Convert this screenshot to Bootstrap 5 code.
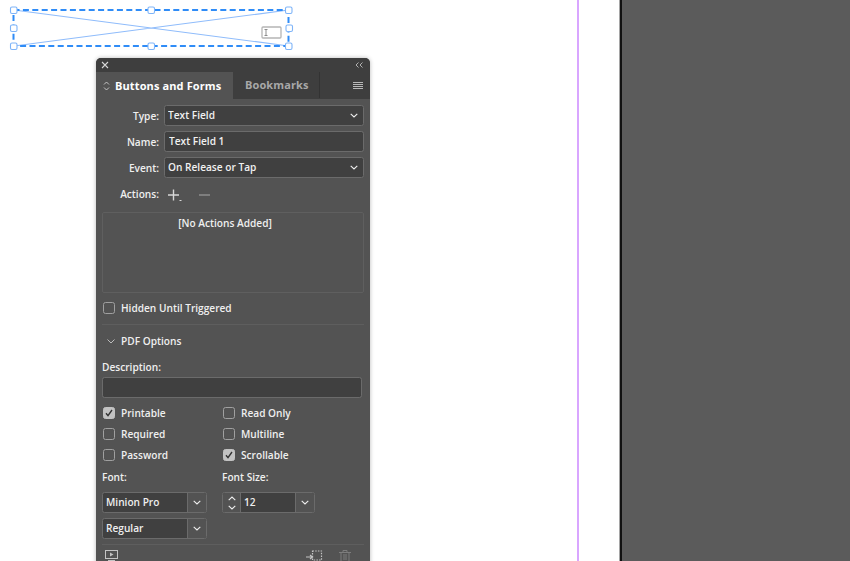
<!DOCTYPE html>
<html lang="en">
<head>
<meta charset="utf-8">
<title>Buttons and Forms</title>
<link href="https://cdn.jsdelivr.net/npm/bootstrap@5.3.0/dist/css/bootstrap.min.css" rel="stylesheet">
<style>
html,body{margin:0;height:561px;overflow:hidden;background:#fff}
.stage{position:relative;width:850px;height:561px;overflow:hidden;font-family:"Open Sans","Liberation Sans",sans-serif}
.page-area{width:579px;border-right:2px solid #d9a6ff}
.gutter-area{width:41px}
.paste-area{flex:1;background:#5b5b5b;border-left:2px solid #111;box-shadow:-1px 0 0 #a5a5a5}
.frame-art{position:absolute;left:8px;top:5px}
.panel{position:absolute;left:96px;top:58px;width:274px;height:520px;background:#535353;border-radius:5px 5px 0 0;box-shadow:0 0 4px rgba(0,0,0,.28);color:#efefef;font-size:10.15px;font-weight:600;line-height:14px;overflow:hidden}
.title-strip{height:14px;background:#3e3e3e;padding:0 7px 0 5px}
.tab-strip{height:27px;background:#3e3e3e}
.tab-on{width:137px;background:#535353;font-size:11px;font-weight:700;color:#fff;padding-left:7px;gap:5px;letter-spacing:.12px}
.tab-off{width:87px;font-size:11px;font-weight:700;color:#a8a8a8;border-right:1px solid #333;padding-left:12px;letter-spacing:.1px;margin-bottom:1px}
.tab-fill{flex:1;padding-right:7px}
.panel-body{padding:6px 6px 0}
.lab{width:57px;text-align:right;margin-right:5px;flex:none}
.form-row-x{height:21px;margin-bottom:5px}
.panel .form-select,.panel .form-control{height:21px;min-height:0;background-color:#404040;border:1px solid #6b6b6b;border-radius:2.5px;color:#f1f1f1;font-size:10.15px;font-weight:600;line-height:14px;padding:0 18px 1px 3px;box-shadow:none}
.panel .form-control{padding-left:4px}
.panel .form-select{background-image:url("data:image/svg+xml,%3Csvg xmlns='http://www.w3.org/2000/svg' viewBox='0 0 8 5'%3E%3Cpath d='M.7.8 4 4l3.3-3.2' fill='none' stroke='%23eee' stroke-width='1.1'/%3E%3C/svg%3E");background-size:8px 5px;background-position:right 5px center}
.w-field{width:200px}
.actions-row{height:21px;margin-bottom:8px}
.action-list{width:262px;height:81px;border:1px solid #5f5f5f;border-radius:2px;text-align:center;padding:3px 16px 0 0;margin-bottom:9px}
.ck{height:12px;gap:6px;padding-left:1px}
.panel .form-check-input{width:12px;height:12px;margin:0;background-color:#535353;border:1px solid #a0a0a0;border-radius:2.5px;flex:none;float:none}
.panel .form-check-input:checked{background-color:#c2c2c2;border-color:#c2c2c2;background-image:url("data:image/svg+xml,%3Csvg xmlns='http://www.w3.org/2000/svg' viewBox='0 0 12 12'%3E%3Cpath d='M3 6.2 5 8.6 9 3' fill='none' stroke='%23333' stroke-width='1.4'/%3E%3C/svg%3E");background-size:12px 12px}
.rule{height:1px;background:#5e5e5e}
.rule-top{margin-top:10px}
.pdf-head{height:32px;gap:6px;padding-left:5px}
.desc-label{margin-bottom:3px;height:14px;margin-top:3px}
.panel .desc-input{width:260px;margin-bottom:9px}
.check-grid{display:grid;grid-template-columns:120px 120px;row-gap:9px;margin-bottom:9px}
.col-two{display:grid;grid-template-columns:120px 120px;height:14px;margin-bottom:8px}
.combo{height:21px;border:1px solid #6b6b6b;border-radius:2.5px;background:#404040;overflow:hidden}
.combo-wide{width:105px}
.combo-text{flex:1;padding:0 0 1px 3px;border-right:1px solid #6b6b6b;height:100%}
.combo-arrow{width:18px;height:100%;flex:none;background:#535353}
.stepper{width:93px}
.step-btns{width:18px;flex:none;height:100%;background:#535353;border-right:1px solid #6b6b6b}
.font-rows{row-gap:5px;display:grid;grid-template-columns:120px 120px;margin-bottom:5px}
.panel-foot{height:20px;padding:5px 13px 0 3px}
</style>
</head>
<body>
<div class="stage d-flex">
  <div class="page-area"></div>
  <div class="gutter-area"></div>
  <div class="paste-area"></div>

  <svg class="frame-art" width="288" height="46" viewBox="8 5 288 46" fill="none">
    <path d="M14 10 288.500 46M288.500 10 14 46" stroke="#8fbcfb" stroke-width="1.200"/>
    <rect x="13.500" y="10" width="275" height="36" stroke="#2f8cf7" stroke-width="2" stroke-dasharray="6 3.400"/>
    <g fill="#fff" stroke="#7eb4f8" stroke-width="1.100">
      <rect x="10.500" y="7" width="6.500" height="6.500" rx="1.500"/>
      <rect x="148" y="7" width="6.500" height="6.500" rx="1.500"/>
      <rect x="285.500" y="7" width="6.500" height="6.500" rx="1.500"/>
      <rect x="10.500" y="25" width="6.500" height="6.500" rx="1.500"/>
      <rect x="286" y="25" width="6.500" height="6.500" rx="1.500"/>
      <rect x="10.500" y="43" width="6.500" height="6.500" rx="1.500"/>
      <rect x="148" y="43" width="6.500" height="6.500" rx="1.500"/>
      <rect x="285.500" y="43" width="6.500" height="6.500" rx="1.500"/>
    </g>
    <rect x="262" y="27" width="19" height="11" rx="1" stroke="#b5b5b5" stroke-width="1.300" fill="#fff"/>
    <path d="M264.500 29.500h3M264.500 35.500h3M266 29.500v6" stroke="#8d8d8d" stroke-width="1"/>
  </svg>

  <div class="panel">
    <div class="title-strip d-flex align-items-center justify-content-between">
      <svg width="8" height="8" viewBox="0 0 8 8"><path d="M1 1l6 6M7 1 1 7" stroke="#d6d6d6" stroke-width="1.100"/></svg>
      <svg width="8" height="6" viewBox="0 0 8 6" fill="none" stroke="#bdbdbd" stroke-width=".9"><path d="M3.500.5 1 3l2.500 2.500M7.500.5 5 3l2.500 2.500"/></svg>
    </div>
    <div class="tab-strip d-flex">
      <div class="tab-on d-flex align-items-center">
        <svg width="7" height="10" viewBox="0 0 7 10" fill="none" stroke="#d0d0d0" stroke-width=".9"><path d="M1 3.500 3.500 1 6 3.500M1 6.500 3.500 9 6 6.500"/></svg>
        <span>Buttons and Forms</span>
      </div>
      <div class="tab-off d-flex align-items-center">Bookmarks</div>
      <div class="tab-fill d-flex align-items-center justify-content-end">
        <svg width="10" height="8" viewBox="0 0 10 8" stroke="#b8b8b8" stroke-width="1"><path d="M0 .5h10M0 2.500h10M0 4.500h10M0 6.500h10"/></svg>
      </div>
    </div>

    <div class="panel-body">
      <div class="form-row-x d-flex align-items-center">
        <div class="lab">Type:</div>
        <select class="form-select w-field" aria-label="Type"><option>Text Field</option></select>
      </div>
      <div class="form-row-x d-flex align-items-center">
        <div class="lab">Name:</div>
        <input class="form-control w-field" value="Text Field 1" aria-label="Name">
      </div>
      <div class="form-row-x d-flex align-items-center">
        <div class="lab">Event:</div>
        <select class="form-select w-field" aria-label="Event"><option>On Release or Tap</option></select>
      </div>
      <div class="actions-row d-flex align-items-center">
        <div class="lab">Actions:</div>
        <svg class="ms-1 mt-1" width="14" height="14" viewBox="0 0 14 14" stroke="#d8d8d8" stroke-width="1.400"><path d="M0 6h11M5.500 .5v11"/><path d="M11.500 11.500h2" stroke-width="1"/></svg>
        <svg class="ms-3 mt-1" width="12" height="14" viewBox="0 0 12 14" stroke="#8d8d8d" stroke-width="1.400"><path d="M1 6h11"/></svg>
      </div>
      <div class="action-list">[No Actions Added]</div>
      <label class="ck d-flex align-items-center"><input class="form-check-input" type="checkbox">Hidden Until Triggered</label>
      <div class="rule rule-top"></div>
      <div class="pdf-head d-flex align-items-center">
        <svg width="8" height="5" viewBox="0 0 8 5" fill="none" stroke="#c8c8c8" stroke-width=".9"><path d="M.5.500 4 4 7.500.500"/></svg>
        <span>PDF Options</span>
      </div>
      <div class="desc-label">Description:</div>
      <input class="form-control desc-input" aria-label="Description">
      <div class="check-grid">
        <label class="ck d-flex align-items-center"><input class="form-check-input" type="checkbox" checked>Printable</label>
        <label class="ck d-flex align-items-center"><input class="form-check-input" type="checkbox">Read Only</label>
        <label class="ck d-flex align-items-center"><input class="form-check-input" type="checkbox">Required</label>
        <label class="ck d-flex align-items-center"><input class="form-check-input" type="checkbox">Multiline</label>
        <label class="ck d-flex align-items-center"><input class="form-check-input" type="checkbox">Password</label>
        <label class="ck d-flex align-items-center"><input class="form-check-input" type="checkbox" checked>Scrollable</label>
      </div>
      <div class="col-two"><div>Font:</div><div>Font Size:</div></div>
      <div class="font-rows">
        <div class="combo combo-wide d-flex align-items-center">
          <div class="combo-text d-flex align-items-center">Minion Pro</div>
          <div class="combo-arrow d-flex align-items-center justify-content-center"><svg width="8" height="5" viewBox="0 0 8 5" fill="none" stroke="#eee" stroke-width="1.100"><path d="M.7.800 4 4l3.300-3.200"/></svg></div>
        </div>
        <div class="combo stepper d-flex align-items-center">
          <div class="step-btns d-flex flex-column align-items-center justify-content-center gap-1">
            <svg width="8" height="5" viewBox="0 0 8 5" fill="none" stroke="#eee" stroke-width="1.100"><path d="M.7 4.200 4 1l3.300 3.200"/></svg>
            <svg width="8" height="5" viewBox="0 0 8 5" fill="none" stroke="#eee" stroke-width="1.100"><path d="M.7.800 4 4l3.300-3.200"/></svg>
          </div>
          <div class="combo-text d-flex align-items-center">12</div>
          <div class="combo-arrow d-flex align-items-center justify-content-center"><svg width="8" height="5" viewBox="0 0 8 5" fill="none" stroke="#eee" stroke-width="1.100"><path d="M.7.800 4 4l3.300-3.200"/></svg></div>
        </div>
        <div class="combo combo-wide d-flex align-items-center">
          <div class="combo-text d-flex align-items-center">Regular</div>
          <div class="combo-arrow d-flex align-items-center justify-content-center"><svg width="8" height="5" viewBox="0 0 8 5" fill="none" stroke="#eee" stroke-width="1.100"><path d="M.7.800 4 4l3.300-3.200"/></svg></div>
        </div>
      </div>
      <div class="rule"></div>
      <div class="panel-foot d-flex justify-content-between align-items-start">
        <svg width="13" height="11" viewBox="0 0 13 11" fill="none" stroke="#c4c4c4"><rect x=".5" y=".5" width="12" height="8"/><path d="M5 2.500v4l3.500-2z" fill="#c4c4c4" stroke="none"/><path d="M3 10.500h7"/></svg>
        <div class="d-flex gap-3">
          <svg width="17" height="12" viewBox="0 0 17 12" fill="none" stroke="#c4c4c4" stroke-width="1.200"><path d="M0 7h6M4 5l2.500 2L4 9"/><rect x="6.500" y="1" width="9" height="9" stroke-dasharray="1.500 1.200"/></svg>
          <svg width="12" height="12" viewBox="0 0 12 12" fill="none" stroke="#7d7d7d"><path d="M0 2.500h12M4 2.500V.5h4v2M2 2.500v9h8v-9M5 4v6M7 4v6"/></svg>
        </div>
      </div>
    </div>
  </div>
</div>
<script src="https://cdn.jsdelivr.net/npm/bootstrap@5.3.0/dist/js/bootstrap.bundle.min.js"></script>
</body>
</html>
